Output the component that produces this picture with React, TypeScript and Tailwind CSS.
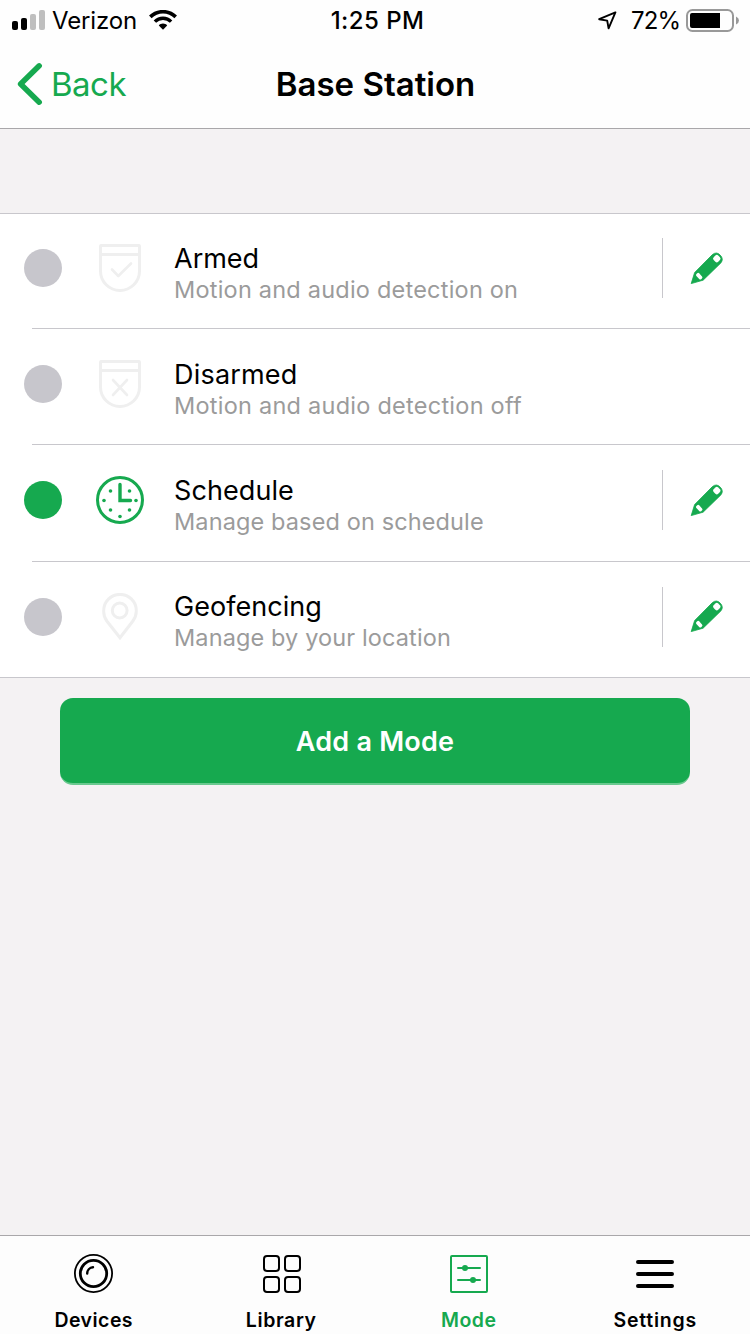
import React from 'react';

const GREEN = '#16a94f';
const FAINT = '#efefef';

// ─── Status bar ─────────────────────────────────────────────────────────────
function SignalBars() {
  return (
    <svg width="33" height="20" viewBox="0 0 33 20" className="shrink-0">
      <rect x="0" y="11" width="6" height="9" rx="2" fill="#000" />
      <rect x="9" y="8" width="6" height="12" rx="2" fill="#000" />
      <rect x="18" y="4" width="6" height="16" rx="2" fill="#bfbfbf" />
      <rect x="27" y="0" width="6" height="20" rx="2" fill="#bfbfbf" />
    </svg>
  );
}

function WifiIcon() {
  return (
    <svg width="28" height="20" viewBox="0 0 28 20" fill="none" stroke="#000" className="shrink-0">
      <path d="M1.3 6.9 A18 18 0 0 1 26.7 6.9" strokeWidth="3.6" />
      <path d="M5.9 11.6 A11.5 11.5 0 0 1 22.1 11.6" strokeWidth="3.4" />
      <path d="M14 13.6 C12.2 13.6 10.8 14.3 9.8 15.4 L14 19.8 L18.2 15.4 C17.2 14.3 15.8 13.6 14 13.6 Z" fill="#000" stroke="none" />
    </svg>
  );
}

function LocationArrow() {
  return (
    <svg width="19" height="19" viewBox="0 0 19 19" fill="none" stroke="#000" strokeWidth="1.9" strokeLinejoin="round" className="shrink-0">
      <path d="M17.4 1.4 L1.2 8.2 L9.2 9.6 L10.6 17.4 Z" />
    </svg>
  );
}

function Battery() {
  return (
    <svg width="53" height="23" viewBox="0 0 53 23" className="shrink-0">
      <rect x="1" y="1" width="46" height="21" rx="5.5" fill="none" stroke="#999" strokeWidth="2" />
      <path d="M6 4 H34 V19 H6 Q4 19 4 17 V6 Q4 4 6 4 Z" fill="#000" />
      <path d="M50 7.5 Q53 9 53 11.5 Q53 14 50 15.5 Z" fill="#999" />
    </svg>
  );
}

function StatusBar() {
  return (
    <div className="flex h-10 text-2xl leading-[40px]">
      <div className="flex w-[250px] items-center pl-3">
        <SignalBars />
        <span className="ml-[7px] w-[97px] pt-px tracking-[-0.15px]">Verizon</span>
        <WifiIcon />
      </div>
      <div className="w-[250px] pt-px pl-[5px] text-center font-medium tracking-[0.45px]">1:25 PM</div>
      <div className="flex w-[250px] items-center justify-end pr-[11px]">
        <LocationArrow />
        <span className="ml-[14px] w-[55px] pt-px tracking-[-0.8px]">72%</span>
        <Battery />
      </div>
    </div>
  );
}

// ─── Mode icons ─────────────────────────────────────────────────────────────
function ShieldIcon({ children }: { children: React.ReactNode }) {
  return (
    <svg width="48" height="48" viewBox="0 0 48 48" fill="none" stroke={FAINT} strokeWidth="3" strokeLinecap="round" strokeLinejoin="round">
      <path d="M5 1.5 H43 Q43.5 1.5 43.5 3 V27 A19.5 19.5 0 0 1 4.5 27 V3 Q4.5 1.5 5 1.5 Z" />
      <path d="M5 10.5 H43" strokeLinecap="butt" />
      {children}
    </svg>
  );
}

function ArmedIcon() {
  return (
    <ShieldIcon>
      <path d="M16 25.5 L22.3 32 L35 19.5" strokeWidth="2.6" />
    </ShieldIcon>
  );
}

function DisarmedIcon() {
  return (
    <ShieldIcon>
      <path d="M17 20 L31 35 M31 20 L17 35" strokeWidth="2.6" />
    </ShieldIcon>
  );
}

function ScheduleIcon() {
  const dots = [[8, 24.5], [40, 24.5], [14.5, 15], [33.5, 15], [14.5, 34], [33.5, 34], [24, 40.5]];
  return (
    <svg width="48" height="48" viewBox="0 0 48 48" fill="none" stroke={GREEN} strokeWidth="3">
      <circle cx="24" cy="24" r="22.5" />
      <path d="M24 8.5 V24.5 H34.5" strokeWidth="3.4" strokeLinecap="round" />
      {dots.map(([x, y]) => (
        <circle key={`${x}-${y}`} cx={x} cy={y} r="1.8" fill={GREEN} stroke="none" />
      ))}
    </svg>
  );
}

function GeofencingIcon() {
  return (
    <svg width="48" height="48" viewBox="0 0 48 48" fill="none" stroke={FAINT} strokeWidth="3">
      <path d="M24 44.7 L10.8 28 A16.3 16.3 0 0 1 7.7 17.7 A16.3 16.3 0 0 1 40.3 17.7 A16.3 16.3 0 0 1 36.9 28 Z" />
      <circle cx="23.7" cy="17.5" r="7.4" />
    </svg>
  );
}

function PencilIcon() {
  return (
    <svg width="34" height="34" viewBox="0 0 34 34">
      <path
        d="M1.2 31.6 L4.6 20.6 L22.4 2.6 Q26.6 -0.8 30.2 3.1 Q34 7 30.9 10.9 L13.1 28.2 Z"
        fill={GREEN}
        stroke={GREEN}
        strokeWidth="0.8"
        strokeLinejoin="round"
      />
      <rect x="-3.2" y="-3.2" width="6.4" height="6.4" rx="2" transform="translate(26.8 6.6) rotate(45)" fill="#fff" />
      <rect x="-3.5" y="-1.9" width="7" height="3.8" rx="1.4" transform="translate(9.2 24.2) rotate(48)" fill="#fff" />
    </svg>
  );
}

const modes = [
  { name: 'Armed', detail: 'Motion and audio detection on', icon: ArmedIcon, editable: true, row: 'h-[114px] pb-[6px]', text: 'pt-[12px]', pencil: 'pt-[2px]', title: 'tracking-[0px]', sub: 'tracking-[0.22px]' },
  { name: 'Disarmed', detail: 'Motion and audio detection off', icon: DisarmedIcon, editable: false, row: 'h-[115px] pb-[5px]', text: 'pt-[12px]', pencil: 'pt-[2px]', title: 'tracking-[0.2px]', sub: 'tracking-[0.25px]' },
  { name: 'Schedule', detail: 'Manage based on schedule', icon: ScheduleIcon, editable: true, active: true, row: 'h-[116px] pb-[6px]', text: 'pt-[12px]', pencil: 'pt-[2px]', title: 'tracking-[0.08px]', sub: 'tracking-[0.12px]' },
  { name: 'Geofencing', detail: 'Manage by your location', icon: GeofencingIcon, editable: true, row: 'h-[115px] pb-[5px]', text: 'pt-[10px]', pencil: 'pt-0', title: 'tracking-[0.05px]', sub: 'tracking-[0.12px]' },
];

function ModeList() {
  return (
    <ul className="border-y border-[#c8c7cc] bg-white">
      {modes.map((mode, i) => {
        const Icon = mode.icon;
        return (
          <li key={mode.name}>
            {i > 0 && <div className="ml-8 h-px bg-[#c8c7cc]" />}
            <div className={`flex items-center pl-6 ${mode.row}`}>
              <span className={`h-[38px] w-[38px] rounded-full ${mode.active ? 'bg-[#16a94f]' : 'bg-[#c7c6cc]'}`} />
              <span className="ml-[34px] shrink-0">
                <Icon />
              </span>
              <div className={`ml-[30px] flex-1 ${mode.text}`}>
                <div className={`text-[27px] leading-8 text-black ${mode.title}`}>{mode.name}</div>
                <div className={`text-[23.5px] leading-[30px] text-[#9b9b9b] ${mode.sub}`}>{mode.detail}</div>
              </div>
              {mode.editable && (
                <button
                  className={`flex h-[60px] w-[88px] items-center border-l border-[#c8c7cc] pl-[27px] ${mode.pencil}`}
                  aria-label={`Edit ${mode.name}`}
                >
                  <PencilIcon />
                </button>
              )}
            </div>
          </li>
        );
      })}
    </ul>
  );
}

// ─── Tab bar ────────────────────────────────────────────────────────────────
function DevicesIcon() {
  return (
    <svg width="40" height="40" viewBox="0 0 40 40" fill="none" stroke="#000">
      <circle cx="19.5" cy="19.5" r="18.6" strokeWidth="1.8" />
      <circle cx="19.5" cy="19.5" r="13.2" strokeWidth="2.8" />
      <path d="M13.2 19.5 A6.3 6.3 0 0 1 19 13.2" strokeWidth="2.4" strokeLinecap="round" />
    </svg>
  );
}

function LibraryIcon() {
  return (
    <svg width="40" height="40" viewBox="-1 0 40 40" fill="none" stroke="#000" strokeWidth="2">
      <rect x="2" y="2" width="15" height="15" rx="3" />
      <rect x="23" y="2" width="15" height="15" rx="3" />
      <rect x="2" y="23" width="15" height="15" rx="3" />
      <rect x="23" y="23" width="15" height="15" rx="3" />
    </svg>
  );
}

function ModeIcon() {
  return (
    <svg width="40" height="40" viewBox="0 0 40 40" fill="none" stroke={GREEN} strokeWidth="2" strokeLinecap="round">
      <rect x="2" y="2" width="36" height="36" rx="1" />
      <path d="M9 14 H31 M9 26 H31" />
      <circle cx="16" cy="14" r="3" fill={GREEN} stroke="none" />
      <circle cx="24" cy="26" r="3" fill={GREEN} stroke="none" />
    </svg>
  );
}

function SettingsIcon() {
  return (
    <svg width="40" height="40" viewBox="1 0 40 40" fill="none" stroke="#000" strokeWidth="4" strokeLinecap="round">
      <path d="M3 8 H37 M3 20 H37 M3 32 H37" />
    </svg>
  );
}

const tabs = [
  { name: 'Devices', icon: DevicesIcon, color: 'text-black', label: 'tracking-[0.45px]' },
  { name: 'Library', icon: LibraryIcon, color: 'text-black', label: 'tracking-[0.6px]' },
  { name: 'Mode', icon: ModeIcon, color: 'text-[#16a94f]', label: 'tracking-[0.5px]' },
  { name: 'Settings', icon: SettingsIcon, color: 'text-black', label: 'pr-[2px] tracking-[0.75px]' },
];

function TabBar() {
  return (
    <nav className="grid h-[99px] grid-cols-4 border-t border-[#a9a7aa] bg-[#fdfdfd]">
      {tabs.map(({ name, icon: Icon, color, label }) => (
        <button key={name} className={`flex flex-col items-center pt-[18px] ${color}`}>
          <Icon />
          <span className={`mt-[12px] text-[19.5px] leading-7 font-semibold ${label}`}>{name}</span>
        </button>
      ))}
    </nav>
  );
}

export default function App() {
  return (
    <div className="flex h-[1334px] w-[750px] flex-col overflow-hidden bg-[#f4f2f3] font-['Inter',sans-serif] text-black">
      <header className="h-[129px] border-b border-[#a9a7aa] bg-[#fefefe]">
        <StatusBar />
        <div className="flex h-[88px] items-center">
          <button className="flex w-[250px] items-center pl-[17px] text-[33px] text-[#16a94f]">
            <svg width="26" height="44" viewBox="0 0 26 44" fill="none" stroke={GREEN} strokeWidth="5.5" strokeLinecap="round" strokeLinejoin="round">
              <path d="M22.2 3.8 L3.6 22 L22.2 40.2" />
            </svg>
            <span className="ml-[8px] pt-[2px] tracking-[-0.5px]">Back</span>
          </button>
          <h1 className="w-[250px] pt-[2px] pl-px text-center text-[33px] font-semibold whitespace-nowrap">Base Station</h1>
        </div>
      </header>

      <main className="flex-1 pt-[84px]">
        <ModeList />
        <div className="px-[60px] pt-5">
          <button className="h-[87px] w-full rounded-[13px] border-b-2 border-[#69c98e] bg-[#16a94f] pt-[3px] text-[27px] font-semibold tracking-[0.25px] text-white">
            Add a Mode
          </button>
        </div>
      </main>

      <TabBar />
    </div>
  );
}
